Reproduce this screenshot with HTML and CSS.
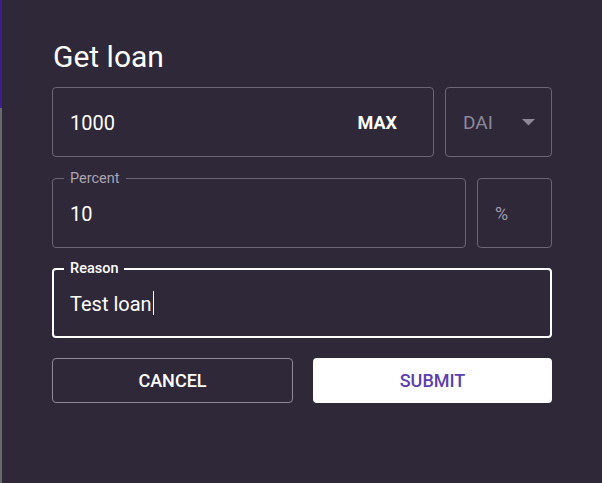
FILE: index.html
```html
<!DOCTYPE html>
<html>
<head>
<meta charset="utf-8">
<link rel="stylesheet" href="styles.css">
</head>
<body>
<div class="page">
  <div class="strip"></div>
  <div class="dialog">
    <h2 class="title">Get loan</h2>
    <div class="form">
      <div class="row">
        <div class="field grow">
          <span class="value">1000</span>
          <span class="max">MAX</span>
        </div>
        <div class="field select">
          <span class="muted">DAI</span>
          <svg class="arrow" width="13" height="7" viewBox="0 0 13 7"><polygon points="0,0 13,0 6.5,6.5" fill="#8d8898"/></svg>
        </div>
      </div>
      <div class="row row-percent">
        <div class="field grow">
          <span class="label">Percent</span>
          <span class="value">10</span>
        </div>
        <div class="field unit">
          <span class="muted">%</span>
        </div>
      </div>
      <div class="row">
        <div class="field grow focused">
          <span class="label label-focus">Reason</span>
          <span class="value">Test loan</span><span class="caret"></span>
        </div>
      </div>
      <div class="row buttons">
        <button class="btn cancel">CANCEL</button>
        <button class="btn submit">SUBMIT</button>
      </div>
    </div>
  </div>
</div>
</body>
</html>
```

FILE: styles.css
```css
html, body {
  margin: 0;
  padding: 0;
  height: 100%;
  background: #2e2839;
  font-family: Roboto, "Liberation Sans", sans-serif;
}
.page {
  display: flex;
  height: 483px;
}
.strip {
  width: 2px;
  flex: none;
  background: linear-gradient(#3b1f8e 0, #3b1f8e 108px, #6a6a6a 108px);
}
.dialog {
  padding-left: 50px;
  width: 500px;
}
.title {
  margin: 39px 0 12px 1px;
  font-size: 30px;
  line-height: 36px;
  font-weight: 400;
  color: #ffffff;
}
.form {
  display: flex;
  flex-direction: column;
  gap: 20px;
}
.row {
  display: flex;
  gap: 11px;
}
.row-percent { margin-top: 1px; }
.field {
  position: relative;
  box-sizing: border-box;
  height: 70px;
  border: 1px solid #6b6677;
  border-radius: 4px;
  display: flex;
  align-items: center;
  padding: 0 18px 0 17px;
}
.grow { flex: 1; }
.select { width: 107px; justify-content: space-between; padding-right: 16px; }
.unit { width: 75px; }
.value {
  color: #ffffff;
  font-size: 20px;
  margin-top: 1px;
}
.max {
  margin-left: auto;
  margin-right: 18px;
  color: #ffffff;
  font-size: 18px;
  font-weight: 700;
}
.muted {
  color: #8d8898;
  font-size: 19px;
}
.unit .muted { font-size: 18px; color: #a09bab; }
.arrow { display: block; margin-top: 1px; }
.label {
  position: absolute;
  left: 11px;
  top: -9px;
  padding: 0 6px;
  background: #2e2839;
  color: #a9a5b3;
  font-size: 14.5px;
  line-height: 18px;
}
.focused {
  border: 2px solid #ffffff;
  padding-left: 16px;
}
.label-focus {
  color: #ffffff;
  left: 10px;
  top: -10px;
  font-weight: 500;
}
.caret {
  width: 1px;
  height: 24px;
  background: #ffffff;
  margin-left: 1px;
}
.buttons {
  gap: 20px;
}
.btn {
  flex: 1;
  height: 45px;
  border-radius: 4px;
  font-family: Roboto, "Liberation Sans", sans-serif;
  font-size: 18px;
  font-weight: 500;
  cursor: pointer;
}
.cancel {
  background: transparent;
  border: 1px solid #8e8a97;
  color: #ffffff;
}
.submit {
  background: #ffffff;
  border: none;
  color: #5b3fab;
}
```
